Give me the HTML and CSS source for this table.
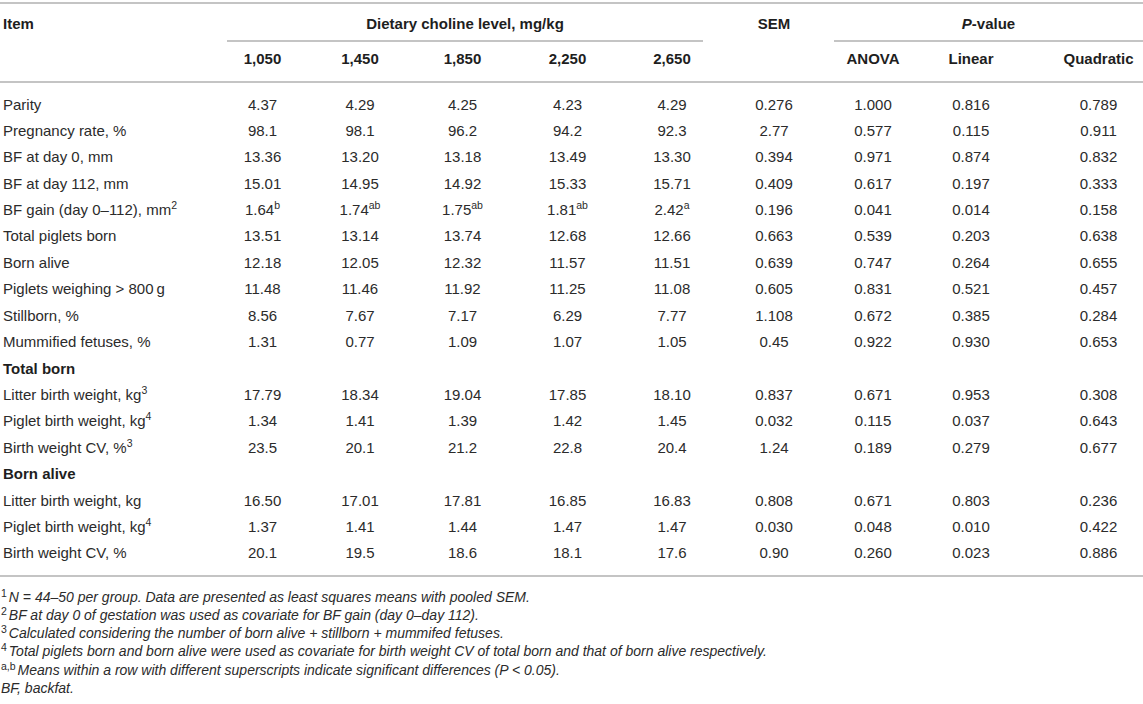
FILE: index.html
```html
<!DOCTYPE html>
<html>
<head>
<meta charset="utf-8">
<link rel="stylesheet" href="styles.css">
</head>
<body>
<table class="tbl">
  <colgroup>
    <col class="c-item"><col class="c-n1"><col class="c-n2"><col class="c-n3"><col class="c-n4"><col class="c-n5"><col class="c-sem"><col class="c-an"><col class="c-lin"><col class="c-quad">
  </colgroup>
  <thead>
    <tr class="h1">
      <th class="left">Item</th>
      <th colspan="5"><div class="span-line diet">Dietary choline level, mg/kg</div></th>
      <th>SEM</th>
      <th colspan="3"><div class="span-line pval"><i>P</i>-value</div></th>
    </tr>
    <tr class="h2">
      <th></th>
      <th>1,050</th><th>1,450</th><th>1,850</th><th>2,250</th><th>2,650</th>
      <th></th>
      <th>ANOVA</th><th>Linear</th><th class="quad">Quadratic</th>
    </tr>
  </thead>
  <tbody>
    <tr class="first"><td class="left">Parity</td><td>4.37</td><td>4.29</td><td>4.25</td><td>4.23</td><td>4.29</td><td>0.276</td><td>1.000</td><td>0.816</td><td class="quad">0.789</td></tr>
    <tr><td class="left">Pregnancy rate, %</td><td>98.1</td><td>98.1</td><td>96.2</td><td>94.2</td><td>92.3</td><td>2.77</td><td>0.577</td><td>0.115</td><td class="quad">0.911</td></tr>
    <tr><td class="left">BF at day 0, mm</td><td>13.36</td><td>13.20</td><td>13.18</td><td>13.49</td><td>13.30</td><td>0.394</td><td>0.971</td><td>0.874</td><td class="quad">0.832</td></tr>
    <tr><td class="left">BF at day 112, mm</td><td>15.01</td><td>14.95</td><td>14.92</td><td>15.33</td><td>15.71</td><td>0.409</td><td>0.617</td><td>0.197</td><td class="quad">0.333</td></tr>
    <tr><td class="left">BF gain (day 0–112), mm<sup>2</sup></td><td>1.64<sup>b</sup></td><td>1.74<sup>ab</sup></td><td>1.75<sup>ab</sup></td><td>1.81<sup>ab</sup></td><td>2.42<sup>a</sup></td><td>0.196</td><td>0.041</td><td>0.014</td><td class="quad">0.158</td></tr>
    <tr><td class="left">Total piglets born</td><td>13.51</td><td>13.14</td><td>13.74</td><td>12.68</td><td>12.66</td><td>0.663</td><td>0.539</td><td>0.203</td><td class="quad">0.638</td></tr>
    <tr><td class="left">Born alive</td><td>12.18</td><td>12.05</td><td>12.32</td><td>11.57</td><td>11.51</td><td>0.639</td><td>0.747</td><td>0.264</td><td class="quad">0.655</td></tr>
    <tr><td class="left">Piglets weighing &gt; 800&#8201;g</td><td>11.48</td><td>11.46</td><td>11.92</td><td>11.25</td><td>11.08</td><td>0.605</td><td>0.831</td><td>0.521</td><td class="quad">0.457</td></tr>
    <tr><td class="left">Stillborn, %</td><td>8.56</td><td>7.67</td><td>7.17</td><td>6.29</td><td>7.77</td><td>1.108</td><td>0.672</td><td>0.385</td><td class="quad">0.284</td></tr>
    <tr><td class="left">Mummified fetuses, %</td><td>1.31</td><td>0.77</td><td>1.09</td><td>1.07</td><td>1.05</td><td>0.45</td><td>0.922</td><td>0.930</td><td class="quad">0.653</td></tr>
    <tr class="section"><td class="left">Total born</td><td></td><td></td><td></td><td></td><td></td><td></td><td></td><td></td><td></td></tr>
    <tr><td class="left">Litter birth weight, kg<sup>3</sup></td><td>17.79</td><td>18.34</td><td>19.04</td><td>17.85</td><td>18.10</td><td>0.837</td><td>0.671</td><td>0.953</td><td class="quad">0.308</td></tr>
    <tr><td class="left">Piglet birth weight, kg<sup>4</sup></td><td>1.34</td><td>1.41</td><td>1.39</td><td>1.42</td><td>1.45</td><td>0.032</td><td>0.115</td><td>0.037</td><td class="quad">0.643</td></tr>
    <tr><td class="left">Birth weight CV, %<sup>3</sup></td><td>23.5</td><td>20.1</td><td>21.2</td><td>22.8</td><td>20.4</td><td>1.24</td><td>0.189</td><td>0.279</td><td class="quad">0.677</td></tr>
    <tr class="section"><td class="left">Born alive</td><td></td><td></td><td></td><td></td><td></td><td></td><td></td><td></td><td></td></tr>
    <tr><td class="left">Litter birth weight, kg</td><td>16.50</td><td>17.01</td><td>17.81</td><td>16.85</td><td>16.83</td><td>0.808</td><td>0.671</td><td>0.803</td><td class="quad">0.236</td></tr>
    <tr><td class="left">Piglet birth weight, kg<sup>4</sup></td><td>1.37</td><td>1.41</td><td>1.44</td><td>1.47</td><td>1.47</td><td>0.030</td><td>0.048</td><td>0.010</td><td class="quad">0.422</td></tr>
    <tr class="last"><td class="left">Birth weight CV, %</td><td>20.1</td><td>19.5</td><td>18.6</td><td>18.1</td><td>17.6</td><td>0.90</td><td>0.260</td><td>0.023</td><td class="quad">0.886</td></tr>
  </tbody>
</table>
<div class="notes">
  <p><sup>1</sup><i>N</i> = 44–50 per group. Data are presented as least squares means with pooled SEM.</p>
  <p><sup>2</sup>BF at day 0 of gestation was used as covariate for BF gain (day 0–day 112).</p>
  <p><sup>3</sup>Calculated considering the number of born alive + stillborn + mummifed fetuses.</p>
  <p><sup>4</sup>Total piglets born and born alive were used as covariate for birth weight CV of total born and that of born alive respectively.</p>
  <p><sup>a,b</sup>Means within a row with different superscripts indicate significant differences (<i>P</i> &lt; 0.05).</p>
  <p>BF, backfat.</p>
</div>
</body>
</html>
```
FILE: styles.css
```css
html, body {
  margin: 0;
  padding: 0;
  background: #ffffff;
}
body {
  font-family: "Liberation Sans", Arial, Helvetica, sans-serif;
  color: #2b2b2b;
  font-size: 15px;
}
.tbl {
  width: 1143px;
  border-collapse: collapse;
  table-layout: fixed;
  margin-top: 2px;
  border-top: 2px solid #c4c4c4;
  border-bottom: 2px solid #c4c4c4;
}
.c-item { width: 215px; }
.c-n1 { width: 95px; }
.c-n2 { width: 100px; }
.c-n3 { width: 105px; }
.c-n4 { width: 105px; }
.c-n5 { width: 104px; }
.c-sem { width: 100px; }
.c-an { width: 98px; }
.c-lin { width: 98px; }
.c-quad { width: 123px; }

th, td {
  padding: 0;
  text-align: center;
  white-space: nowrap;
}
th {
  font-weight: bold;
  color: #1e1e1e;
}
.left {
  text-align: left;
  padding-left: 3px;
}
.quad {
  padding-left: 34px;
}
.h1 th {
  height: 38px;
  vertical-align: middle;
}
.span-line {
  border-bottom: 2px solid #c4c4c4;
  height: 38px;
  line-height: 40px;
  box-sizing: border-box;
}
.diet {
  margin-left: 12px;
  margin-right: 21px;
}
.pval {
  margin-left: 10px;
}
.span-line i {
  font-style: italic;
}
.h2 th {
  height: 40px;
  line-height: 18px;
  padding-bottom: 5px;
  border-bottom: 2px solid #c4c4c4;
  box-sizing: border-box;
}
.h2 th.quad {
  padding-left: 34px;
}
tbody td {
  height: 26.45px;
  line-height: 18px;
  vertical-align: middle;
  box-sizing: border-box;
}
tbody tr.first td {
  height: 35.45px;
  padding-top: 9px;
}
tbody tr.last td {
  height: 35.45px;
  padding-bottom: 9px;
}
tbody tr.first td.quad,
tbody tr.last td.quad {
  padding-left: 34px;
}
.section td {
  font-weight: bold;
  color: #1e1e1e;
}
sup {
  font-size: 10.5px;
  line-height: 0;
  vertical-align: 6px;
}
.notes {
  padding-top: 11px;
  padding-left: 1px;
}
.notes p {
  margin: 0;
  font-style: italic;
  font-size: 14px;
  line-height: 18.2px;
  color: #2b2b2b;
}
.notes sup {
  font-style: normal;
  font-size: 10.5px;
  vertical-align: 5px;
  margin-right: 2px;
}
.notes i {
  font-style: italic;
}
```
